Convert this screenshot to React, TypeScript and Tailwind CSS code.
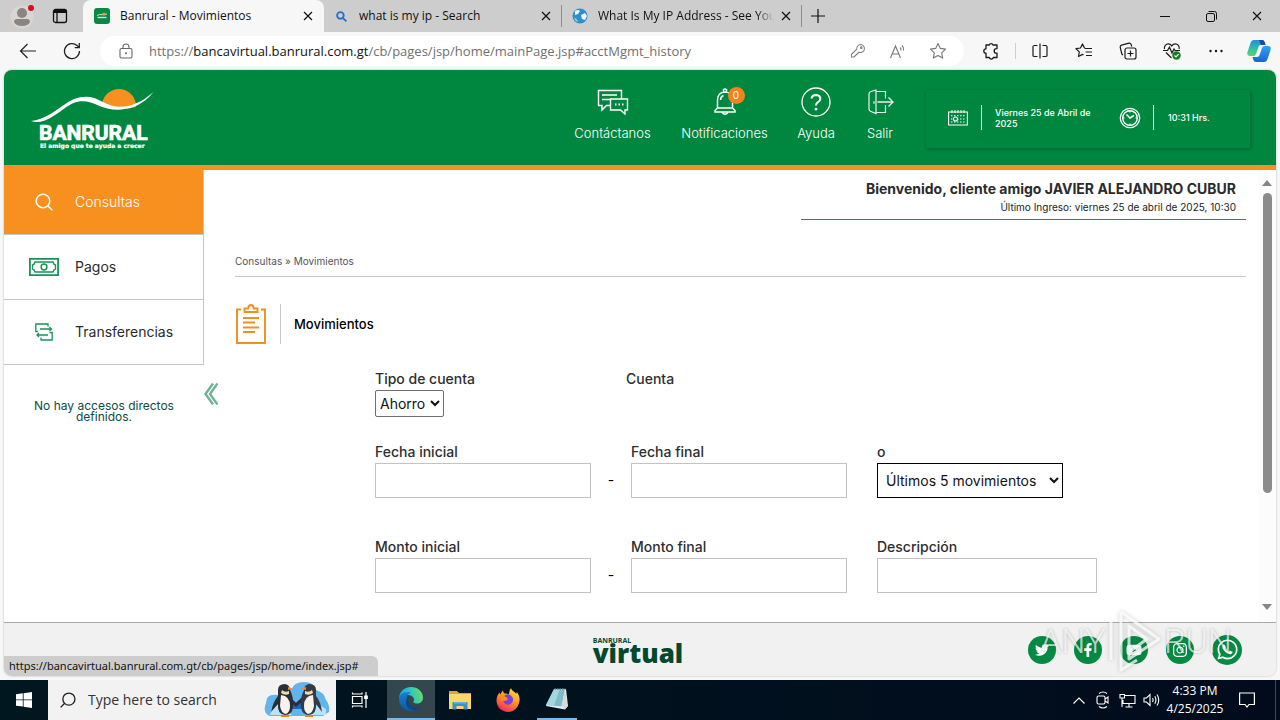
import React from "react";
import { FaFacebookF, FaInstagram, FaTwitter, FaWhatsapp, FaYoutube } from "react-icons/fa";

type IconProps = { className?: string };

const CloseIcon = () => (
  <svg viewBox="0 0 10 10" className="h-[10px] w-[10px]" fill="none" stroke="#111" strokeWidth="1.2">
    <path d="M1 1l8 8M9 1L1 9" />
  </svg>
);

function ProfileIcon() {
  return (
    <svg viewBox="0 0 26 26" className="h-[26px] w-[26px]">
      <circle cx="12" cy="14" r="11.5" fill="#d9d5d3" />
      <circle cx="12" cy="10" r="5" fill="#8a8583" />
      <path d="M4 19q0-3 3-3h10q3 0 3 3-2 4-8 4t-8-4z" fill="#8a8583" />
      <circle cx="21" cy="5" r="3" fill="#d60f1c" />
    </svg>
  );
}

function WorkspacesIcon() {
  return (
    <svg viewBox="0 0 16 16" className="h-4 w-4" fill="none" stroke="#111" strokeWidth="1.3">
      <rect x="1.5" y="1.5" width="13" height="13" rx="2" />
      <path d="M2 3.4h12" strokeWidth="3.2" />
      <path d="M5 5v9" />
    </svg>
  );
}

function BackIcon() {
  return (
    <svg viewBox="0 0 18 16" className="h-4 w-[18px]" fill="none" stroke="#222" strokeWidth="1.2">
      <path d="M17 8H1.5M8.5 1L1.5 8l7 7" />
    </svg>
  );
}

function ReloadIcon() {
  return (
    <svg viewBox="0 0 18 18" className="h-[18px] w-[18px]" fill="none" stroke="#222" strokeWidth="1.3">
      <path d="M16.5 9A7.5 7.5 0 1 1 14 3.5l2 1.8" />
      <path d="M16.3 1v4.6h-4.6" />
    </svg>
  );
}

function LockIcon() {
  return (
    <svg viewBox="0 0 14 16" className="h-4 w-[14px] shrink-0" fill="none" stroke="#666" strokeWidth="1.1">
      <rect x="1" y="5.5" width="12" height="9.5" rx="1.5" />
      <path d="M4 5.5V4a3 3 0 0 1 6 0v1.5" />
      <circle cx="7" cy="10.2" r="1" fill="#666" stroke="none" />
    </svg>
  );
}

function KeyIcon() {
  return (
    <svg viewBox="0 0 16 16" className="h-4 w-4" fill="none" stroke="#808080" strokeWidth="1.1">
      <path d="M10.500 1.500a4 4 0 1 1-1.600 7.700L7.600 10.500 4 14H1.500v-2.700L6.800 6.100A4 4 0 0 1 10.500 1.500z" />
      <circle cx="11.300" cy="4.700" r="0.800" />
    </svg>
  );
}

function ReadAloudIcon() {
  return (
    <svg viewBox="0 0 18 16" className="h-4 w-[18px]" fill="none" stroke="#777" strokeWidth="1.1">
      <path d="M1.500 15L6.500 3l5 12M3.200 11h6.600M11 4.500q1.200 1 1 3M13 2.500q2 1.800 1.600 5" />
    </svg>
  );
}

function StarIcon() {
  return (
    <svg viewBox="0 0 18 18" className="h-[18px] w-[18px]" fill="none" stroke="#777" strokeWidth="1.1" strokeLinejoin="round">
      <path d="M9 1.500l2.300 4.900 5.200.7-3.800 3.700 1 5.300L9 13.500l-4.700 2.600 1-5.300L1.500 7.100l5.200-.7z" />
    </svg>
  );
}

function PuzzleIcon() {
  return (
    <svg viewBox="0 0 18 18" className="h-[18px] w-[18px]" fill="none" stroke="#1b1b1b" strokeWidth="1.3" strokeLinejoin="round">
      <path d="M4 3h3.200a2 2 0 0 1 3.800 0h4v3.700h-.6a2.200 2.200 0 0 0 0 4.400h.6V15.500h-3.600a2.200 2.200 0 0 1-4.200 0H4V11.200a2.200 2.200 0 0 1 0-4.400z" />
    </svg>
  );
}

function SplitIcon() {
  return (
    <svg viewBox="0 0 16 16" className="h-4 w-4" fill="none" stroke="#1b1b1b" strokeWidth="1.2">
      <path d="M5.500 2.500H2.500q-1.500 0-1.500 1v9q0 1 1.500 1h3M10.500 2.500h3q1.500 0 1.500 1v9q0 1-1.500 1h-3M8 .5v15" />
    </svg>
  );
}

function FavoritesIcon() {
  return (
    <svg viewBox="0 0 18 18" className="h-[18px] w-[18px]" fill="none" stroke="#1b1b1b" strokeWidth="1.200" strokeLinejoin="round">
      <path d="M10 6.300L9.500 6 7.500 2 5.500 6l-4.500.7 3.300 3.200-.8 4.600L7.500 12.400l1 .5M10 6.500h7M10.500 10h6.500M11 13.500h6" />
    </svg>
  );
}

function CollectionsIcon() {
  return (
    <svg viewBox="0 0 18 18" className="h-[18px] w-[18px]" fill="none" stroke="#1b1b1b" strokeWidth="1.200">
      <rect x="6" y="6" width="11" height="11" rx="2" />
      <path d="M11.500 8.500v6M8.500 11.500h6M4 12.800Q3 12.600 2.700 11.500L1.200 5.200Q1 3.600 2.500 3.200L10 1.200q1.600-.3 2.100 1.200L12.800 4.500" />
    </svg>
  );
}

function HealthIcon() {
  return (
    <svg viewBox="0 0 18 18" className="h-[18px] w-[18px]" fill="none" stroke="#1b1b1b" strokeWidth="1.200">
      <path d="M1.500 7C.8 4 3 1.800 5.300 1.800q2.200 0 3.500 2 1.300-2 3.500-2c2.300 0 4.500 2.200 3.800 5.200M3 10.500L8.500 16" />
      <path d="M0 8.500h4.500L6.500 5l2.500 6 2-4 1 1.500h5" />
      <circle cx="13.500" cy="13.500" r="4.200" fill="#157a22" stroke="none" />
      <path d="M11.500 13.500l1.500 1.500 2.600-2.800" stroke="#fff" />
    </svg>
  );
}

function DotsIcon() {
  return (
    <svg viewBox="0 0 16 4" className="h-1 w-4" fill="#1b1b1b">
      <circle cx="2.500" cy="2" r="1.200" />
      <circle cx="8" cy="2" r="1.200" />
      <circle cx="13.500" cy="2" r="1.200" />
    </svg>
  );
}

function CopilotIcon() {
  return (
    <svg viewBox="0 0 24 24" className="h-6 w-6">
      <defs>
        <linearGradient id="cpA" x1="0" y1="0" x2="0" y2="1">
          <stop offset="0" stopColor="#1f8fe0" />
          <stop offset=".6" stopColor="#35c3a0" />
          <stop offset="1" stopColor="#5fd16d" />
        </linearGradient>
        <linearGradient id="cpB" x1="0" y1="0" x2="0" y2="1">
          <stop offset="0" stopColor="#2aa5f0" />
          <stop offset="1" stopColor="#1c62d8" />
        </linearGradient>
      </defs>
      <path d="M7 1h8q2 0 2.600 2L18.500 6H14q-2 0-2.600 2L9 15q-.6 2-2.500 2H3q-3.500 0-2.500-4L3.500 4Q4.500 1 7 1z" fill="url(#cpA)" />
      <path d="M12 1h3q2 0 2.600 2L18.500 6H14z" fill="#154a9c" />
      <path d="M17 23H9q-2 0-2.600-2L5.500 18H10q2 0 2.600-2L15 9q.6-2 2.500-2H21q3.500 0 2.500 4L20.500 20q-1 3-3.500 3z" fill="url(#cpB)" />
    </svg>
  );
}

function BanruralLogo() {
  return (
    <svg viewBox="0 0 124 66" className="h-[66px] w-[124px]" role="img" aria-label="Banrural">
      <path d="M71 17A17 17 0 0 1 105 19Q88 24 71 17z" fill="#f7901e" />
      <path
        d="M0 33C18 31 30 17 43 11c12-4.500 20-2 28 2.500 10 5.500 20 7 31 3 9-3 14-7 20.500-12.500-5 6.500-11 11-19 14.500-12 4.500-24 4-35-.5-9-4-17-6.500-26-3C31 20 19 35 4 34z"
        fill="#fff"
      />
      <text x="8" y="52" fill="#fff" stroke="#fff" strokeWidth=".7" className="font-['Roboto',sans-serif] text-[21px] font-bold">
        BANRURAL
      </text>
      <text x="9" y="60" fill="#fff" stroke="#fff" strokeWidth=".2" className="font-['DejaVu_Sans',sans-serif] text-[6px] font-bold">
        El amigo que te ayuda a crecer
      </text>
    </svg>
  );
}

function ChatIcon() {
  return (
    <svg viewBox="0 0 32 26" className="h-[26px] w-8" fill="none" stroke="#fff" strokeWidth="1.400">
      <path d="M13 16.500H9.500L5 21v-4.500H1.500v-15h23v8" />
      <path d="M5 6h15M5 10.500h8" />
      <path d="M13.500 10h17v11H28v4l-4.500-4h-10z" />
      <path d="M18 15.500h1.500M21.500 15.500H23M25 15.500h1.500" strokeWidth="1.800" />
    </svg>
  );
}

function BellIcon() {
  return (
    <svg viewBox="0 0 22 28" className="h-7 w-[22px]" fill="none" stroke="#fff" strokeWidth="1.500">
      <path d="M9.500 4V1.500q1.500-1 3 0V4M3.500 20V12q0-7.500 7.500-8 7.500.5 7.500 8v8M3.500 20L1 22.500V24h20v-1.500L18.500 20z" />
      <path d="M8 24.500q3 3.500 6 0M6.500 12q.2-3.500 3-4.500" />
    </svg>
  );
}

function HelpIcon() {
  return (
    <svg viewBox="0 0 30 30" className="h-[30px] w-[30px]" fill="none" stroke="#fff">
      <circle cx="15" cy="15" r="14" strokeWidth="1.300" />
      <path d="M10.500 11.500Q11 8 15 8q4.300.2 4.300 3.800 0 2.200-2.300 3.400-2 1-2 3.300" strokeWidth="2" />
      <circle cx="15" cy="22.200" r="1.400" fill="#fff" stroke="none" />
    </svg>
  );
}

function ExitIcon() {
  return (
    <svg viewBox="0 0 28 26" className="h-[26px] w-7" fill="none" stroke="#e8f5ec" strokeWidth="1.200">
      <path d="M10 1L5 2.500Q3 3 3 5v15q0 2 2 2.500l5 2zM10 2.500h9.500v7M19.500 16v7.500H10M8 12.200v2.500" />
      <path d="M11.500 13H27M22.500 8.500L27 13l-4.500 4.500" strokeWidth="1.400" />
    </svg>
  );
}

function CalendarIcon() {
  return (
    <svg viewBox="0 0 20 16" className="h-4 w-5 shrink-0" fill="none" stroke="#fff" strokeWidth="1.100">
      <path d="M.6 2h18.800v13H.6z" />
      <path d="M4 0v3M7 0v3M10 0v3M13 0v3M16 0v3" strokeWidth="1" />
      <path d="M3 5.800h14.500M3 9h14.500M3 12h14.500" strokeDasharray="1.500 1.500" />
      <circle cx="7.500" cy="9" r="2" fill="#00873f" />
    </svg>
  );
}

function ClockIcon() {
  return (
    <svg viewBox="0 0 22 22" className="h-[22px] w-[22px] shrink-0" fill="none" stroke="#fff">
      <circle cx="11" cy="11" r="9.700" strokeWidth="1.300" />
      <circle cx="11" cy="11" r="7.300" strokeWidth="1.400" />
      <path d="M7.500 7.500L11 11l4-2.500" strokeWidth="1.500" />
      <path d="M11 4v1.500M11 16.500V18M4 11h1.500M16.500 11H18" />
    </svg>
  );
}

function SearchIcon({ className }: IconProps) {
  return (
    <svg viewBox="0 0 18 18" className={className} fill="none" stroke="currentColor" strokeWidth="1.500">
      <circle cx="8" cy="8" r="6.800" />
      <path d="M13 13l4.300 4.300" />
    </svg>
  );
}

function MoneyIcon() {
  return (
    <svg viewBox="0 0 30 18" className="h-[18px] w-[30px]" fill="none" stroke="#1c9357">
      <path d="M.9.9h28.200v16.200H.9z" strokeWidth="1.800" />
      <path d="M6 4h18q.5 2.500 2.500 3v4q-2 .5-2.500 3H6q-.5-2.500-2.500-3V7Q5.500 6.500 6 4z" strokeWidth="1.400" />
      <circle cx="15" cy="9" r="2.900" strokeWidth="1.500" />
    </svg>
  );
}

function TransferIcon() {
  return (
    <svg viewBox="0 0 18 18" className="h-[18px] w-[18px]" fill="none" stroke="#1c9357" strokeWidth="1.300">
      <path d="M3 8.500H.8V1H13v2.500M5 6h11.500M14.500 4l2 2-2 2M14.500 9.500h2.700V17H6v-2.500M13 12H2M4 10l-2 2 2 2" />
    </svg>
  );
}

function ClipboardIcon() {
  return (
    <svg viewBox="0 0 30 40" className="h-10 w-[30px]" fill="none" stroke="#ef8f20" strokeWidth="1.900">
      <path d="M5 5.500H1V39h28V5.500h-4" />
      <path d="M8.500 8V4.500h3.700Q12.500 1 15 1t2.800 3.500h3.700V8z" />
      <path d="M7 14h16M7 18.500h12M7 23.500h16M7 28h12" />
    </svg>
  );
}

function BrandMark() {
  return (
    <div className="flex flex-col pr-1 font-['Open_Sans',sans-serif] font-extrabold text-[#05482f]">
      <span className="text-[7px] leading-[7px] font-bold">BANRURAL</span>
      <span className="text-[26px] leading-[18px]">virtual</span>
    </div>
  );
}

function WindowsIcon() {
  return (
    <svg viewBox="0 0 16 16" className="h-4 w-4" fill="#fff">
      <path d="M0 2.300l6.800-1v6.200H0zM7.600 1.200L16 0v7.500H7.600zM0 8.300h6.800v6.300L0 13.700zM7.600 8.300H16V16l-8.400-1.200z" />
    </svg>
  );
}

function PenguinsArt() {
  return (
    <svg viewBox="0 0 66 38" className="h-[38px] w-[66px]">
      <path d="M2 22Q2 12 14 14 18 4 28 8 30 1 40 1q10 0 12 8 8 2 10 10 4 5 3 12l-6 4H6Q-2 32 2 22z" fill="#62b4ea" />
      <path d="M8 27l8-5 12 12H6zM62 28l-8-5-10 11h18z" fill="#b9e2f8" />
      <path d="M25 15l7 7 7-7v13H25z" fill="#1668c4" />
      <path d="M24 17l8 7 8-7" fill="none" stroke="#2c2f37" strokeWidth="3" />
      <path d="M14 9Q14 3 21 3q5 1 5 6 4 8 3 17-1 8-8 8-8-1-7-11L7 31Q9 21 14 15z" fill="#292d35" />
      <path d="M17 14q9 1 9 11 0 6-4 8-5-1-6-8z" fill="#f6f3ec" />
      <path d="M52 9Q52 3 45 3q-5 1-5 6-4 8-3 17 1 8 8 8 8-1 7-11l6 8q-1-10-6-16z" fill="#343944" />
      <path d="M49 14q-9 1-9 11 0 6 4 8 5-1 6-8z" fill="#f6f3ec" />
      <path d="M18 9q3 3 7 1v3q-4 2-8-1zM48 9q-3 3-7 1v3q4 2 8-1z" fill="#f1d9b0" />
      <path d="M24 6l5 1.500-5 1.500zM42 6l-5 1.500 5 1.500z" fill="#f08a2c" />
      <path d="M17 34h8v2h-8zM41 34h8v2h-8z" fill="#e9842a" />
    </svg>
  );
}

function TaskViewIcon() {
  return (
    <svg viewBox="0 0 18 18" className="h-[18px] w-[18px]" fill="none" stroke="#fff" strokeWidth="1.200">
      <path d="M1.500 5.500h9.500v7H1.500zM1.500 1.500V3h9.500V1.500M1.500 16.500V15h9.500v1.500M15 1v16" />
      <path d="M13.800 5h2.400v2.500h-2.400z" fill="#fff" />
    </svg>
  );
}

function EdgeIcon() {
  return (
    <svg viewBox="0 0 24 24" className="h-6 w-6">
      <defs>
        <linearGradient id="edA" x1="0" y1=".5" x2="1" y2="0.300">
          <stop offset="0" stopColor="#1b9de2" />
          <stop offset=".5" stopColor="#2fc5c0" />
          <stop offset="1" stopColor="#6fe05a" />
        </linearGradient>
        <linearGradient id="edB" x1="0" y1="0" x2="0" y2="1">
          <stop offset="0" stopColor="#1380d6" />
          <stop offset="1" stopColor="#0c59a4" />
        </linearGradient>
      </defs>
      <path d="M0 12C0 4 6 0 12 0c7 0 12 5 12 10.500 0 4-3 6-6 6-2.500 0-4.500-1-3.500-2.500C16 11 13 8 9 8c-5 0-9 3-9 4z" fill="url(#edA)" />
      <path d="M0 12c0-4 4.500-7 9-7 2 0 3 .8 3 .8C8.500 7 7 10 7.500 14c.7 5 6 8 12.500 6-2 2.500-5 4-8 4C5 24 0 18.500 0 12z" fill="url(#edB)" />
      <path d="M9.500 12c-1.500 5 3 9 9.500 8.200q1.500-.3 3-1.700-1 3-5 4.500c-6 1-10.500-4-10-8 .2-2 1-3 2.500-3z" fill="#11457f" />
      <path d="M10 10.500q3-1 4.800 1.500 0 1.300-.8 2.300-.5 1 1 1.800-3.500 1-5-1.500-1-2 0-4.100z" fill="#34474f" />
    </svg>
  );
}

function FolderIcon() {
  return (
    <svg viewBox="0 0 22 20" className="h-5 w-[22px]">
      <path d="M0 1h8l2 2h12v16H0z" fill="#dda23a" />
      <path d="M0 4h22v15H0z" fill="#fbd669" />
      <path d="M3.500 12h15v7.500h-4V16h-7v3.500h-4z" fill="#3e8fc8" />
      <path d="M5 12h12v1.500H5z" fill="#63b3e4" />
    </svg>
  );
}

function FirefoxIcon() {
  return (
    <svg viewBox="0 0 24 24" className="h-6 w-6">
      <defs>
        <linearGradient id="fxA" x1=".8" y1="0" x2=".3" y2="1">
          <stop offset="0" stopColor="#ffe14a" />
          <stop offset=".45" stopColor="#ff9a22" />
          <stop offset="1" stopColor="#f5255e" />
        </linearGradient>
      </defs>
      <path d="M15 0c.5 3 5 4 5 6q1-1 .8-2C23 7 24 10 23.500 13 22.500 19.500 18 24 12 24S.5 19 .5 12.500C.5 9 2 6 3.500 4.500q.2 1.500.8 2Q6 3 7 2.500q0 2 1.500 3Q11 5 13 6.500 13 2.500 15 0z" fill="url(#fxA)" />
      <path d="M8 8q3-3 7-.5 3 3 1.500 6.500-2 3.500-6 2.500-3-1-3.500-4 1.500 1 3 0 2-.8 2-1.800-1.500-.4-2-1.200-1-.5-2-1.500z" fill="#7a3fe0" />
      <path d="M5 8q1-1.500 3-1 .5 2 3 2.500 0 1.500-2 2t-2 2q-3-2-2-5.500z" fill="#ff8a1e" />
    </svg>
  );
}

function NotepadIcon() {
  return (
    <svg viewBox="0 0 22 22" className="h-[22px] w-[22px]">
      <path d="M8 1h12l2 17-3 3.500L0 18z" fill="#e9eef0" />
      <path d="M8 1.500h11l-3.500 17L0 17z" fill="#7fbcc9" />
      <path d="M8 1.500h5.500L8 17.700 0 17z" fill="#a6d6dd" />
      <path d="M19 1.500l2.500 17-3 2.500-3-2.500z" fill="#d5d9da" />
      <path d="M8.500 1h11" stroke="#5d7d85" strokeDasharray="1.500 1" strokeWidth="1.500" />
    </svg>
  );
}

const tabClose = "flex h-6 w-6 shrink-0 items-center justify-center";

function TabStrip() {
  return (
    <div className="flex h-8 shrink-0 items-stretch bg-[#cdcdcd] text-xs text-[#111]">
      <div className="flex w-[83px] items-center gap-4 pl-[10px]">
        <button type="button" aria-label="Profile"><ProfileIcon /></button>
        <button type="button" aria-label="Tab actions"><WorkspacesIcon /></button>
      </div>
      <div className="flex w-[241px] items-center rounded-t-lg bg-[#f7f7f7] pr-1 pl-[11px]">
        <svg viewBox="0 0 16 16" className="h-4 w-4 shrink-0">
          <rect width="16" height="16" rx="3" fill="#078a43" />
          <path d="M3 7.500q2.500-1.500 5-.8t5-.7" fill="none" stroke="#fff" strokeWidth=".8" />
          <path d="M8 6.500a2 2 0 0 1 4 0z" fill="#f7901e" />
          <path d="M3.500 9.500h9" stroke="#cfe8d8" strokeWidth="1.400" />
        </svg>
        <button type="button" className="ml-[10px] min-w-0 flex-1 truncate text-left">Banrural - Movimientos</button>
        <button type="button" aria-label="Close tab" className={tabClose}><CloseIcon /></button>
      </div>
      <div className="flex w-[238px] items-center border-r [border-image:linear-gradient(to_bottom,transparent_6px,#8d8d8d_6px,#8d8d8d_26px,transparent_26px)_1] pr-[3px] pl-3">
        <svg viewBox="0 0 12 12" className="h-[11px] w-[11px] shrink-0" fill="none" stroke="#2470c8" strokeWidth="2">
          <circle cx="4.800" cy="4.800" r="3.600" />
          <path d="M7.500 7.500l3.800 3.800" />
        </svg>
        <button type="button" className="ml-3 min-w-0 flex-1 truncate text-left">what is my ip - Search</button>
        <button type="button" aria-label="Close tab" className={tabClose}><CloseIcon /></button>
      </div>
      <div className="flex w-[240px] items-center border-r [border-image:linear-gradient(to_bottom,transparent_6px,#8d8d8d_6px,#8d8d8d_26px,transparent_26px)_1] pr-[3px] pl-[10px]">
        <svg viewBox="0 0 16 16" className="h-4 w-4 shrink-0">
          <circle cx="8" cy="8" r="7.500" fill="#2f8fc6" />
          <path d="M3 3q3-2 5 0L6 6 3 7zM9 7l4-2 2 3-2 4-3-1z" fill="#e8f7fb" />
          <path d="M2 10q3 0 4 4Q3 13 2 10z" fill="#8ed3e8" />
        </svg>
        <button type="button" className="ml-[10px] min-w-0 flex-1 overflow-hidden text-left whitespace-nowrap [mask-image:linear-gradient(to_right,#000_90%,transparent)]">
          What Is My IP Address - See Your
        </button>
        <button type="button" aria-label="Close tab" className={tabClose}><CloseIcon /></button>
      </div>
      <button type="button" aria-label="New tab" className="flex w-8 items-center justify-center">
        <svg viewBox="0 0 14 14" className="h-[14px] w-[14px]" stroke="#111" strokeWidth="1.200"><path d="M7 0v14M0 7h14" /></svg>
      </button>
      <div className="ml-auto flex">
        <button type="button" aria-label="Minimize" className="flex w-[46px] items-center justify-center">
          <svg viewBox="0 0 10 10" className="h-[10px] w-[10px]" stroke="#111"><path d="M0 5.500h10" /></svg>
        </button>
        <button type="button" aria-label="Restore" className="flex w-[46px] items-center justify-center">
          <svg viewBox="0 0 11 11" className="h-[11px] w-[11px]" fill="none" stroke="#111"><rect x=".5" y="2.500" width="8" height="8" rx="1.500" /><path d="M2.500.5h6q2 0 2 2v6" /></svg>
        </button>
        <button type="button" aria-label="Close" className="flex w-[46px] items-center justify-center"><CloseIcon /></button>
      </div>
    </div>
  );
}

const toolBtn = "flex h-[30px] w-11 items-center justify-center";

function Toolbar() {
  return (
    <div className="flex h-[38px] shrink-0 items-center bg-[#f7f7f7]">
      <div className="flex w-[100px] pl-[6px]">
        <button type="button" aria-label="Back" className={toolBtn}><BackIcon /></button>
        <button type="button" aria-label="Refresh" className={toolBtn}><ReloadIcon /></button>
      </div>
      <div className="flex h-[30px] min-w-0 flex-1 items-center rounded-full bg-white pr-[6px] pl-[19px]">
        <LockIcon />
        <a href="#acctMgmt_history" className="ml-4 min-w-0 flex-1 truncate text-[13px] leading-5 text-[#707070]">
          https://<span className="text-[#111]">bancavirtual.banrural.com.gt</span>/cb/pages/jsp/home/mainPage.jsp#acctMgmt_history
        </a>
        <button type="button" aria-label="Saved passwords" className="flex w-10 justify-center"><KeyIcon /></button>
        <button type="button" aria-label="Read aloud" className="flex w-10 justify-center"><ReadAloudIcon /></button>
        <button type="button" aria-label="Add to favorites" className="flex w-10 justify-center"><StarIcon /></button>
      </div>
      <div className="ml-[5px] flex items-center">
        <button type="button" aria-label="Extensions" className={toolBtn}><PuzzleIcon /></button>
        <span className="mx-[2px] h-4 w-px bg-[#cfcfcf]" />
        <button type="button" aria-label="Split screen" className={toolBtn}><SplitIcon /></button>
        <button type="button" aria-label="Favorites" className={toolBtn}><FavoritesIcon /></button>
        <button type="button" aria-label="Collections" className={toolBtn}><CollectionsIcon /></button>
        <button type="button" aria-label="Browser essentials" className={toolBtn}><HealthIcon /></button>
        <button type="button" aria-label="Settings and more" className={toolBtn}><DotsIcon /></button>
        <button type="button" aria-label="Copilot" className="flex h-[30px] w-[42px] items-center justify-center"><CopilotIcon /></button>
      </div>
    </div>
  );
}

function NavLink({ label, icon, width }: { label: string; icon: React.ReactNode; width: string }) {
  return (
    <a href="#" className={`flex flex-col items-center gap-[5px] ${width}`}>
      <span className="relative flex h-8 items-center justify-center">{icon}</span>
      <span className="text-[13px] leading-5 font-light whitespace-nowrap">{label}</span>
    </a>
  );
}

function BankHeader() {
  return (
    <header className="flex h-[100px] shrink-0 border-b-[5px] border-[#f7901e] bg-[#00873f] text-white">
      <div className="pt-[18px] pl-[27px]"><BanruralLogo /></div>
      <nav className="ml-auto flex gap-8 pt-4">
        <NavLink label="Contáctanos" icon={<ChatIcon />} width="w-[77px]" />
        <NavLink
          label="Notificaciones"
          width="w-[83px]"
          icon={
            <>
              <BellIcon />
              <span className="absolute top-px left-[14px] flex h-[17px] w-[17px] items-center justify-center rounded-full bg-[#f58220] text-[10px]">0</span>
            </>
          }
        />
        <NavLink label="Ayuda" icon={<HelpIcon />} width="w-9" />
        <NavLink label="Salir" icon={<ExitIcon />} width="w-7" />
      </nav>
      <div className="mt-5 mr-[26px] ml-8 flex h-[58px] w-[324px] items-center pb-[3px] pl-[22px] text-[9px] leading-[11px] font-medium shadow-[1px_1px_4px_rgba(0,0,0,0.3)]">
        <CalendarIcon />
        <span className="mx-[13px] h-[25px] w-px bg-white" />
        <p className="w-28">Viernes 25 de Abril de 2025</p>
        <span className="ml-3"><ClockIcon /></span>
        <span className="mr-[14px] ml-3 h-[25px] w-px bg-white" />
        <p>10:31 Hrs.</p>
      </div>
    </header>
  );
}

function SideItem({ label, icon, active }: { label: string; icon: React.ReactNode; active?: boolean }) {
  return (
    <a
      href="#"
      className={`flex h-[65px] items-center border-r border-b border-[#c6c6c6] text-sm ${active ? "bg-[#f7901e] text-white" : "bg-white text-[#2b2b2b]"}`}
    >
      <span className="flex w-[71px] justify-center pl-2">{icon}</span>
      <span className={active ? "pb-px font-light" : "pb-px"}>{label}</span>
    </a>
  );
}

function Sidebar() {
  return (
    <aside className="w-[200px] shrink-0">
      <nav>
        <SideItem active label="Consultas" icon={<SearchIcon className="h-[18px] w-[18px]" />} />
        <SideItem label="Pagos" icon={<MoneyIcon />} />
        <SideItem label="Transferencias" icon={<TransferIcon />} />
      </nav>
      <p className="mt-[35px] px-5 text-center text-xs leading-[11px] text-[#0d4c42]">No hay accesos directos definidos.</p>
    </aside>
  );
}

const fieldLabel = "block text-sm leading-[22px] font-medium text-[#2e2e2e]";
const fieldBox = "block h-[35px] w-full border border-[#c3c3c3] bg-white px-2 text-sm";

function TextField({ id, label }: { id: string; label: string }) {
  return (
    <div>
      <label htmlFor={id} className={fieldLabel}>{label}</label>
      <input id={id} type="text" className={fieldBox} />
    </div>
  );
}

function Dash() {
  return <span className="self-end pb-[7px] text-center text-sm leading-[22px]">-</span>;
}

function SearchForm() {
  return (
    <form className="mt-6 ml-[140px]">
      <div className="flex">
        <div className="w-[251px]">
          <label htmlFor="tipo" className={fieldLabel}>Tipo de cuenta</label>
          <select id="tipo" className="block h-[27px] w-[69px] rounded-xs border border-[#6f6f6f] bg-white text-sm text-[#111]">
            <option>Ahorro</option>
          </select>
        </div>
        <span className={fieldLabel}>Cuenta</span>
      </div>
      <div className="mt-6 grid grid-cols-[216px_40px_216px_220px]">
        <TextField id="fecha-inicial" label="Fecha inicial" />
        <Dash />
        <TextField id="fecha-final" label="Fecha final" />
        <div className="ml-[30px] w-[186px]">
          <label htmlFor="rango" className={fieldLabel}>o</label>
          <select id="rango" className="block h-[35px] w-full border border-black bg-white pl-1 text-sm text-[#111]">
            <option>Últimos 5 movimientos</option>
          </select>
        </div>
      </div>
      <div className="mt-[38px] grid grid-cols-[216px_40px_216px_220px]">
        <TextField id="monto-inicial" label="Monto inicial" />
        <Dash />
        <TextField id="monto-final" label="Monto final" />
        <div className="ml-[30px] w-[220px]">
          <TextField id="descripcion" label="Descripción" />
        </div>
      </div>
    </form>
  );
}

function MainContent() {
  return (
    <main className="min-w-0 flex-1 overflow-hidden pr-3 pl-[17px]">
      <div className="ml-auto w-[445px] border-b border-[#2b8377] pt-2 pr-[10px] text-right">
        <p className="text-sm leading-[22px] font-bold whitespace-nowrap text-[#2b2b2b]">Bienvenido, cliente amigo JAVIER ALEJANDRO CUBUR</p>
        <p className="h-[19px] text-[10px] leading-[15px] text-[#222]">Último Ingreso: viernes 25 de abril de 2025, 10:30</p>
      </div>
      <div className="mt-[33px] border-b border-[#c9c9c9] pb-[7px] text-[10px] leading-4 text-[#555]">
        <a href="#">Consultas</a> » <a href="#">Movimientos</a>
      </div>
      <div className="mt-[27px] flex h-10 items-center pl-px">
        <ClipboardIcon />
        <span className="ml-[14px] h-10 w-px bg-[#c9c9c9]" />
        <h1 className="ml-[13px] text-[13px] leading-5 font-medium text-black">Movimientos</h1>
      </div>
      <SearchForm />
    </main>
  );
}

function Scrollbar() {
  return (
    <div className="flex w-[18px] shrink-0 flex-col items-center bg-[#fcfcfc] pt-[10px] pb-3">
      <svg viewBox="0 0 10 6" className="h-[6px] w-[10px]" fill="#858585"><path d="M0 6l5-6 5 6z" /></svg>
      <div className="mt-[7px] min-h-0 flex-1">
        <div className="h-[73%] w-[9px] rounded-full bg-[#8b8b8b]" />
      </div>
      <svg viewBox="0 0 10 6" className="h-[6px] w-[10px]" fill="#858585"><path d="M0 0h10L5 6z" /></svg>
    </div>
  );
}

const social = "flex h-7 w-7 items-center justify-center rounded-full bg-[#058a43] text-white";

function Footer() {
  return (
    <footer className="relative grid h-[54px] shrink-0 grid-cols-[1fr_auto_1fr] items-center border-t border-[#a9a9a9] bg-[#f1f1f1]">
      <div className="col-start-2"><BrandMark /></div>
      <div className="mr-[34px] flex items-center justify-end gap-[18px]">
        <a href="#" aria-label="Twitter" className={social}><FaTwitter size={14} /></a>
        <a href="#" aria-label="Facebook" className={social}><FaFacebookF size={14} /></a>
        <a href="#" aria-label="YouTube" className={social}><FaYoutube size={16} /></a>
        <a href="#" aria-label="Instagram" className={social}><FaInstagram size={16} /></a>
        <a href="#" aria-label="WhatsApp" className="flex h-[30px] w-[30px] items-center justify-center rounded-full bg-[#058a43] text-white"><FaWhatsapp size={23} /></a>
      </div>
      <div className="absolute bottom-0 left-0 h-5 w-[374px] truncate rounded-tr-md bg-[#cdcdcd] px-[5px] font-['Noto_Sans',sans-serif] text-[11px] leading-5 text-[#111]">
        https://bancavirtual.banrural.com.gt/cb/pages/jsp/home/index.jsp#
      </div>
      <div className="pointer-events-none absolute right-11 bottom-1 flex h-[62px] w-[192px] items-center justify-between font-['Roboto',sans-serif] text-[34px] leading-none font-light text-white/70 [text-shadow:0_0_3px_rgba(0,0,0,0.25)]">
        <span>ANY</span>
        <svg viewBox="0 0 56 62" className="h-[62px] w-14 shrink-0 drop-shadow-[0_0_2px_rgba(0,0,0,0.25)]" fill="none" stroke="#fff" strokeOpacity=".75" strokeWidth="3" strokeLinejoin="round">
          <path d="M14 2v46M14 2l38 27-30 20V16l18 13-18 13" />
          <path d="M14 48v12l16-10M4 12v38" />
        </svg>
        <span>RUN</span>
      </div>
    </footer>
  );
}

function BankPage() {
  return (
    <div className="mx-1 mb-1 flex min-h-0 flex-1 flex-col overflow-hidden rounded-lg bg-white font-['Inter',sans-serif] shadow-[0_0_2px_rgba(0,0,0,0.3)]">
      <BankHeader />
      <div className="flex min-h-0 flex-1">
        <Sidebar />
        <button type="button" aria-label="Ocultar menú" className="mt-[213px] h-[22px] w-[14px] shrink-0">
          <svg viewBox="0 0 14 22" className="h-[22px] w-[14px]" fill="none" stroke="#6cb592" strokeWidth="2.400">
            <path d="M9 .5L1.500 11 9 21.500M13.500 .5L6 11l7.500 10.500" />
          </svg>
        </button>
        <MainContent />
        <Scrollbar />
      </div>
      <Footer />
    </div>
  );
}

const taskBtn = "flex w-12 items-center justify-center";
const trayBtn = "flex w-6 items-center justify-center";

function Taskbar() {
  return (
    <div className="flex h-10 shrink-0 items-stretch bg-linear-to-r from-[#01171f] to-[#010b1c] text-white">
      <button type="button" aria-label="Start" className={taskBtn}><WindowsIcon /></button>
      <label className="flex w-72 items-center bg-[#f2f2f2] pl-3 text-[#222]">
        <SearchIcon className="h-4 w-4 -scale-x-100" />
        <input
          type="text"
          aria-label="Search"
          placeholder="Type here to search"
          className="ml-3 w-44 bg-transparent text-sm placeholder:text-[#333]"
        />
        <PenguinsArt />
      </label>
      <button type="button" aria-label="Task View" className={taskBtn}><TaskViewIcon /></button>
      <button type="button" aria-label="Microsoft Edge" className="mr-px ml-[3px] flex w-12 items-center justify-center border-b-2 border-[#76b9ed] bg-[#34474f]"><EdgeIcon /></button>
      <button type="button" aria-label="File Explorer" className={taskBtn}><FolderIcon /></button>
      <button type="button" aria-label="Firefox" className={taskBtn}><FirefoxIcon /></button>
      <button type="button" aria-label="Notepad" className="mx-[5px] flex w-10 items-center justify-center border-b-2 border-[#76b9ed]"><NotepadIcon /></button>
      <div className="ml-auto flex">
        <button type="button" aria-label="Show hidden icons" className={trayBtn}>
          <svg viewBox="0 0 12 7" className="h-[7px] w-3" fill="none" stroke="#fff" strokeWidth="1.200"><path d="M.5 6.500L6 1l5.500 5.500" /></svg>
        </button>
        <button type="button" aria-label="Meet Now" className={trayBtn}>
          <svg viewBox="0 0 14 18" className="h-[18px] w-[14px]" fill="none" stroke="#fff" strokeWidth="1.100"><rect x="1" y="5" width="8" height="8" rx="1.500" /><path d="M9 8l3-2v6L9 10M3 2.500q4-3 8 0M3 15.500q4 3 8 0" /></svg>
        </button>
        <button type="button" aria-label="Network" className={trayBtn}>
          <svg viewBox="0 0 17 15" className="h-[15px] w-[17px]" fill="none" stroke="#fff" strokeWidth="1.100"><path d="M6 2.500h10v8H4V7M10 10.500V14M6.500 14h7M1 1.500h4.500V5H1zM3 5v9" /></svg>
        </button>
        <button type="button" aria-label="Volume" className={trayBtn}>
          <svg viewBox="0 0 17 14" className="h-[14px] w-[17px]" fill="none" stroke="#fff" strokeWidth="1.100"><path d="M1 5h2.500L7 1.500v11L3.500 9H1zM9.500 5q1.300 2 0 4M11.800 3.300q2.300 3.700 0 7.400M14 1.500q3.500 5.500 0 11" /></svg>
        </button>
        <div className="flex w-16 flex-col justify-center text-center text-xs leading-[18px] whitespace-nowrap">
          <span>4:33 PM</span>
          <span>4/25/2025</span>
        </div>
        <button type="button" aria-label="Notifications" className="mr-1 flex w-[49px] items-center justify-center border-r border-[#3b4a55] pr-2">
          <svg viewBox="0 0 16 16" className="h-4 w-4" fill="none" stroke="#fff" strokeWidth="1.200"><path d="M.6 1h14.800v11.500H10L8 15l-2-2.500H.6z" /></svg>
        </button>
      </div>
    </div>
  );
}

export default function App() {
  return (
    <div className="flex h-screen flex-col overflow-hidden bg-[#f7f7f7] font-['Open_Sans',sans-serif]">
      <TabStrip />
      <Toolbar />
      <BankPage />
      <Taskbar />
    </div>
  );
}
